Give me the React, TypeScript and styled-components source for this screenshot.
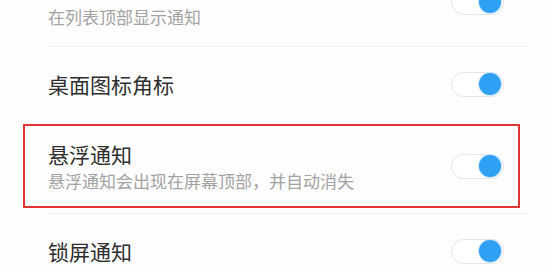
import React from 'react'
import styled, { createGlobalStyle } from 'styled-components'

const Global = createGlobalStyle`
  html, body { margin: 0; padding: 0; background: #fdfdfd; }
  body { font-family: "Noto Sans CJK SC", "Noto Sans", sans-serif; }
`

const Screen = styled.main`
  width: 552px;
  height: 266px;
  overflow: hidden;
  background: #fdfdfd;
  display: flex;
  flex-direction: column;
`

const Row = styled.section<{ $highlight?: boolean; $pad: string; $clip?: boolean }>`
  position: relative;
  display: flex;
  align-items: center;
  justify-content: space-between;
  padding: ${p => p.$pad};
  padding-left: 48px;
  padding-right: 48px;
  margin-top: ${p => (p.$clip ? '-40px' : '0')};
  ${p => p.$highlight && `
    &::after {
      content: '';
      position: absolute;
      left: 23px;
      right: 32px;
      top: 0;
      bottom: 5px;
      border: 2px solid #de3535;
      pointer-events: none;
    }
  `}
`

const Texts = styled.div`
  display: flex;
  flex-direction: column;
`

const Title = styled.div`
  font-size: 21px;
  line-height: 28px;
  color: #2e2e2e;
  min-height: 28px;
`

const Sub = styled.div`
  margin-top: 2px;
  font-size: 17px;
  line-height: 22px;
  color: #a3a3a3;
`

const Divider = styled.hr`
  margin: 0 24px 0 48px;
  border: none;
  border-top: 1px solid #efefef;
  height: 0;
`

const Track = styled.div`
  box-sizing: border-box;
  width: 53px;
  height: 25px;
  border-radius: 13px;
  border: 1px solid #e6e6e6;
  background: #ffffff;
  display: flex;
  align-items: center;
  justify-content: flex-end;
  padding-right: 2px;
  flex-shrink: 0;
`

const Knob = styled.div`
  width: 22px;
  height: 22px;
  border-radius: 50%;
  background: #2fa0f4;
  box-shadow: 0 0 0 1px #cfe8fb;
`

const Toggle = () => (
  <Track>
    <Knob />
  </Track>
)

export default function App() {
  return (
    <Screen>
      <Global />
      <Row $pad="16px 0 18px" $clip>
        <Texts>
          <Title aria-hidden />
          <Sub>在列表顶部显示通知</Sub>
        </Texts>
        <Toggle />
      </Row>
      <Divider />
      <Row $pad="23px 0 26px">
        <Texts>
          <Title>桌面图标角标</Title>
        </Texts>
        <Toggle />
      </Row>
      <Row $pad="16px 0 21px" $highlight>
        <Texts>
          <Title>悬浮通知</Title>
          <Sub>悬浮通知会出现在屏幕顶部，并自动消失</Sub>
        </Texts>
        <Toggle />
      </Row>
      <Divider />
      <Row $pad="23px 0 20px">
        <Texts>
          <Title>锁屏通知</Title>
        </Texts>
        <Toggle />
      </Row>
    </Screen>
  )
}
